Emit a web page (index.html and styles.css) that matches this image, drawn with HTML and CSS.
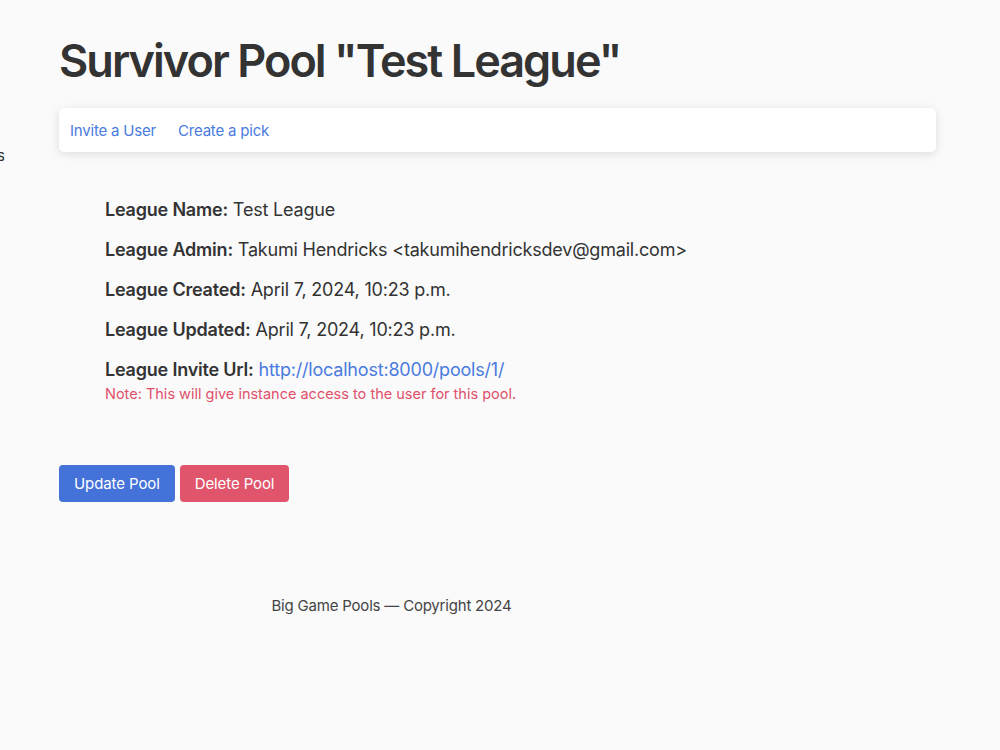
FILE: index.html
```html
<!doctype html>
<html lang="en">
  <head>
    <meta charset="UTF-8" />
    <meta name="viewport" content="width=device-width, initial-scale=1.0" />
    <title>Survivor Pool "Test League"</title>
    <link rel="stylesheet" href="styles.css">
  </head>
  <body>
    <aside class="sidebar">
      <a href="#" class="sidebar-link">Pools</a>
    </aside>

    <main class="container">
      <h1 class="page-title">Survivor Pool "Test League"</h1>

      <nav class="pool-nav">
        <a href="#">Invite a User</a>
        <a href="#">Create a pick</a>
      </nav>

      <div class="details">
        <p><strong>League Name:</strong> Test League</p>
        <p><strong>League Admin:</strong> Takumi Hendricks &lt;takumihendricksdev@gmail.com&gt;</p>
        <p><strong>League Created:</strong> April 7, 2024, 10:23 p.m.</p>
        <p><strong>League Updated:</strong> April 7, 2024, 10:23 p.m.</p>
        <p class="invite">
          <strong>League Invite Url:</strong>
          <a href="#">http://localhost:8000/pools/1/</a>
          <span class="note">Note: This will give instance access to the user for this pool.</span>
        </p>
      </div>

      <div class="actions">
        <button class="btn btn-primary">Update Pool</button>
        <button class="btn btn-danger">Delete Pool</button>
      </div>

      <footer class="footer">Big Game Pools — Copyright 2024</footer>
    </main>
  </body>
</html>
```

FILE: styles.css
```css
* {
  margin: 0;
  padding: 0;
  box-sizing: border-box;
}

body {
  font-family: Inter, "Noto Sans", sans-serif;
  background: #fafafa;
  color: #333;
  min-height: 100vh;
}

a {
  color: #4a7bdf;
  text-decoration: none;
}

.sidebar {
  position: absolute;
  top: 146px;
  left: -34px;
  font-size: 15px;
}

.sidebar-link {
  color: #333;
}

.container {
  width: 877px;
  margin: 0 0 0 59px;
  padding-top: 35px;
}

.page-title {
  font-size: 45px;
  font-weight: 600;
  letter-spacing: -1.95px;
  line-height: 52px;
  color: #333;
  margin-bottom: 21px;
}

.pool-nav {
  display: flex;
  gap: 22px;
  background: white;
  border-radius: 5px;
  box-shadow: 0 2px 10px rgba(0, 0, 0, 0.12);
  padding: 13px 11px 11px;
  font-size: 15px;
  letter-spacing: -0.2px;
  line-height: 20px;
}

.details {
  padding: 46px 0 0 46px;
  font-size: 18px;
  letter-spacing: -0.2px;
}

.details p {
  line-height: 24px;
  margin-bottom: 16px;
}

.details strong {
  font-weight: 600;
}

.note {
  display: block;
  color: #e0506a;
  font-size: 14.5px;
  letter-spacing: 0;
  line-height: 20px;
  margin-top: 2px;
}

.actions {
  display: flex;
  gap: 5px;
  margin-top: 61px;
}

.btn {
  font-family: inherit;
  font-size: 15px;
  letter-spacing: -0.1px;
  color: white;
  border: none;
  border-radius: 4px;
  height: 37px;
  padding: 0 15px;
  cursor: pointer;
}

.btn-primary {
  background: #4472d9;
}

.btn-danger {
  background: #e0556c;
}

.footer {
  width: 665px;
  text-align: center;
  margin-top: 94px;
  font-size: 15px;
  letter-spacing: -0.2px;
  color: #444;
}
```
